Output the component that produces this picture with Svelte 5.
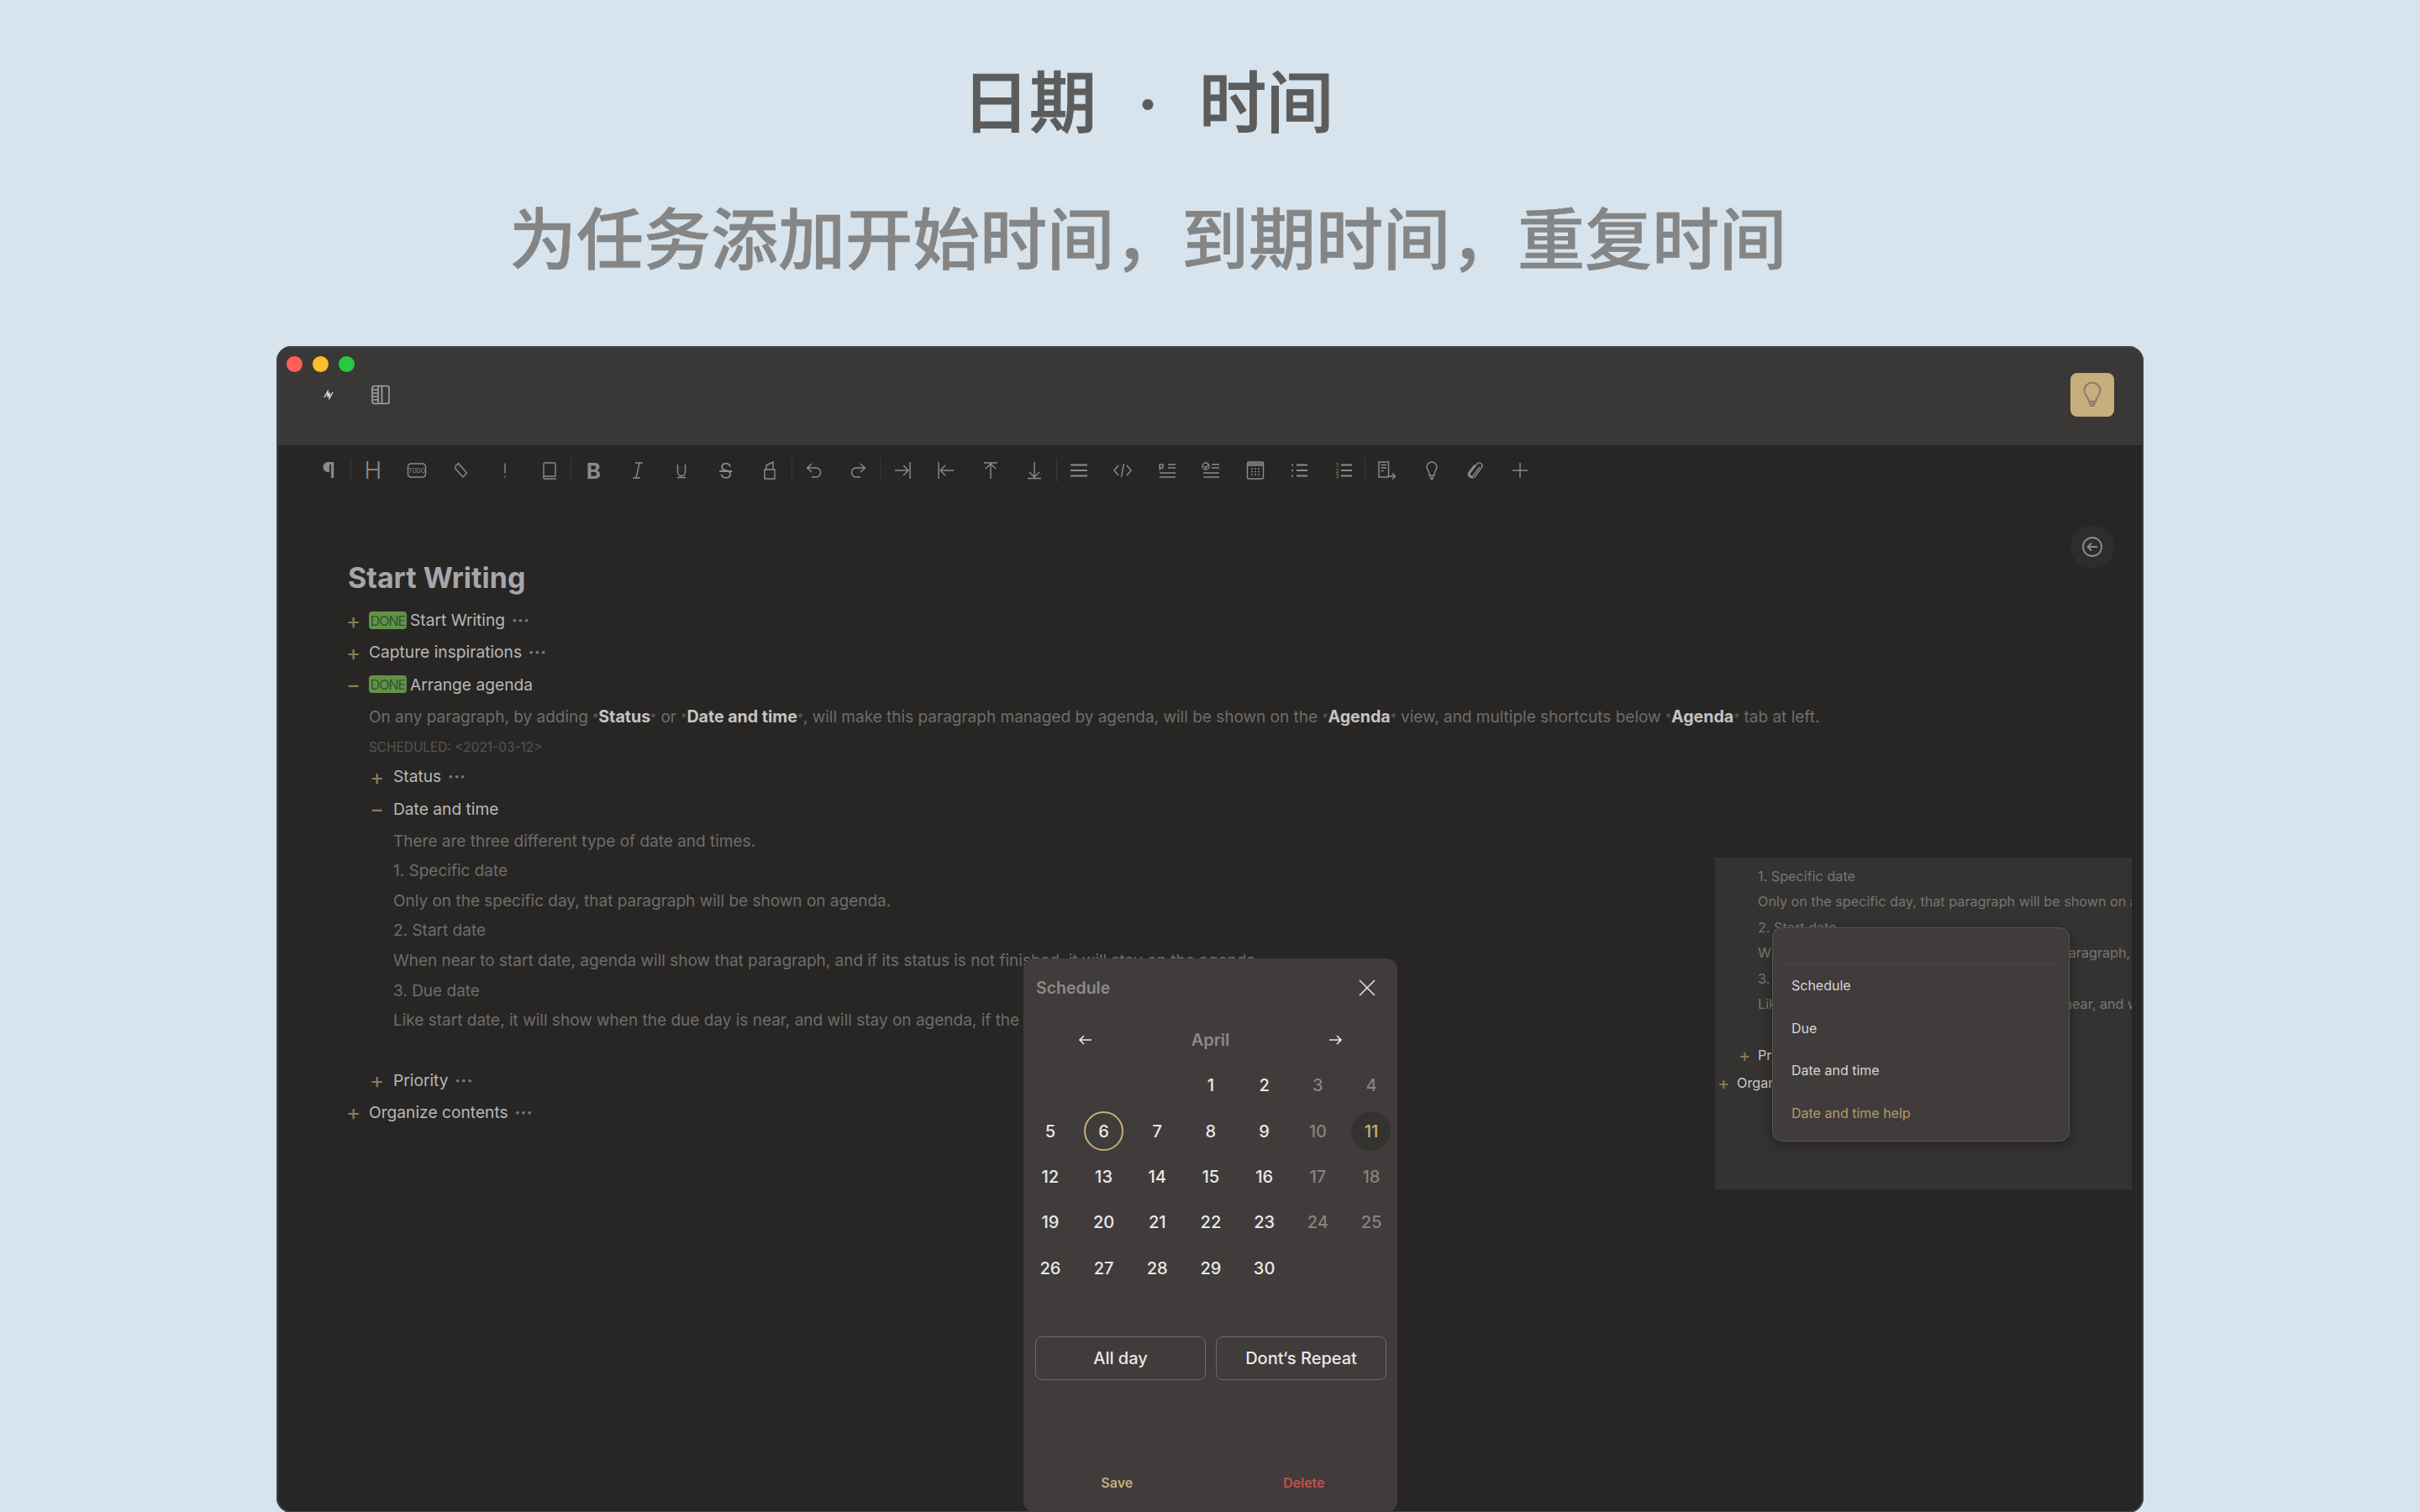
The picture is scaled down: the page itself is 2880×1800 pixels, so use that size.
<script>
	const tools = [
		{ label: '¶', cls: 'pilcrow', sep: true },
		{ label: 'H', cls: 'heading' },
		{ d: 'M7 6h14a3.500 3.500 0 0 1 3.500 3.500v9A3.500 3.500 0 0 1 21 22H7a3.500 3.500 0 0 1-3.500-3.500v-9A3.500 3.500 0 0 1 7 6z', todo: true },
		{ d: 'M7 9 10.500 5.500l10 11.500-4.500 5L7 12zM10.500 9.500h.6' },
		{ d: 'M14 5.500v12M14 21v1.600' },
		{ d: 'M7 24V6.500A1.500 1.500 0 0 1 8.500 5h11A1.500 1.500 0 0 1 21 6.500V21H8.500A1.500 1.500 0 0 0 7 22.500 1.500 1.500 0 0 0 8.500 24H22', sep: true },
		{ label: 'B', cls: 'bold' },
		{ d: 'M11 5h9M8 23h9M16 5l-4 18' },
		{ d: 'M9.500 7v9a4.500 4.500 0 0 0 9 0V7M9 22.500h10' },
		{ label: 'S', cls: 'strike' },
		{ d: 'M8 13h12v11H8zM10 13V8l8-4v9', sep: true },
		{ d: 'M11 6 5.500 11l5.500 5M6 11h10a5.500 5.500 0 0 1 0 11h-5' },
		{ d: 'M17 6l5.500 5L17 16M22 11H12a5.500 5.500 0 0 0 0 11h5', sep: true },
		{ d: 'M5 14h15M15 8l6 6-6 6M23 4v20' },
		{ d: 'M23 14H8M13 8l-6 6 6 6M5 4v20' },
		{ d: 'M6 5h16M14 24V6M8 12l6-6 6 6' },
		{ d: 'M6 23.500h16M14 4v19M8 16l6 6 6-6', sep: true },
		{ d: 'M4 7.500h20M4 14h20M4 20.500h20', thick: true },
		{ d: 'M9 8l-5 6 5 6M19 8l5 6-5 6M15.500 6l-3 16' },
		{ d: 'M5 7h4v4H5zM15 7h9M15 11h9M5 17h19M5 22h19M6 11l-1 3' },
		{ d: 'M15 7h9M15 11h9M5 17h19M5 22h19M6 9l2 2 3-4', ring: true },
		{ d: 'M6 4h16a1.500 1.500 0 0 1 1.500 1.500v17A1.500 1.500 0 0 1 22 24H6a1.500 1.500 0 0 1-1.500-1.500v-17A1.500 1.500 0 0 1 6 4zM5 8h18M5 6h18M9 12h2M13 12h2M17 12h2M9 15.500h2M13 15.500h2M17 15.500h2M9 19h2M13 19h2M17 19h2' },
		{ d: 'M5 7.500h2M11 7.500h13M5 14h2M11 14h13M5 20.500h2M11 20.500h13', thick: true },
		{ d: 'M11 7.500h13M11 14h13M11 20.500h13', nums: true, sep: true, thick: true },
		{ d: 'M4 4h11.500v18H4zM6.500 7.500h6.500M6.500 11h6.500M6.500 14.500h3M15 21h8M20 17.500l3.500 3.500-3.500 3.500' },
		{ d: 'M14 4a6 6 0 0 0-6 6c0 3 2.500 4.500 3 8v2h6v-2c.5-3.500 3-5 3-8a6 6 0 0 0-6-6zM11.500 22.500h5M12.500 24.500h3' },
		{ d: 'M19 10l-7.500 10a2.500 2.500 0 0 1-4-3L16 6a3.500 3.500 0 0 1 5.500 4.200L13 22a5 5 0 0 1-7.500-5L13 7.500' },
		{ d: 'M14 5v18M5 14h18' }
	];

	const blanks = [0, 1, 2];
	const days = Array.from({ length: 30 }, (_, i) => i + 1);
	const isDim = (d) => (d + 2) % 7 === 5 || (d + 2) % 7 === 6;
</script>

<div class="page">
	<header class="hero">
		<h1>日期 <span class="dot">·</span> 时间</h1>
		<h2>为任务添加开始时间，到期时间，重复时间</h2>
	</header>

	<section class="window">
		<div class="titlebar">
			<div class="lights">
				<i class="red"></i>
				<i class="yellow"></i>
				<i class="green"></i>
			</div>
			<div class="barrow">
				<svg class="logo" width="16" height="18" viewBox="0 0 16 18">
					<path d="M3 12 7 5v5l2-3M13 6l-4 7V8l-2 3" fill="none" stroke="#d8d8d8" stroke-width="1.500" />
				</svg>
				<svg class="side" width="24" height="24" viewBox="0 0 24 24" fill="none" stroke="#a5a5a5" stroke-width="1.600">
					<rect x="2" y="1.500" width="20" height="21" rx="2.500" />
					<path d="M9 2v20M13.500 2v20M3 6h5M3 10h5M3 14h5M3 18h5" />
				</svg>
			</div>
			<div class="bulb">
				<svg width="30" height="34" viewBox="0 0 30 34" fill="none" stroke="#857c69" stroke-width="2">
					<path d="M15 2.500a9.500 9.500 0 0 0-9.500 9.500c0 5 4.500 7 5.500 13h8c1-6 5.500-8 5.500-13A9.500 9.500 0 0 0 15 2.500zM11 27.500h8M12 30h6" />
				</svg>
			</div>
		</div>

		<div class="toolbar">
			{#each tools as t}
				<div class="tool" class:sep={t.sep}>
					{#if t.label}
						<span class={t.cls}>{t.label}</span>
					{:else}
						<svg width="28" height="28" viewBox="0 0 28 28" fill="none" stroke="#8b8b8b" stroke-width={t.thick ? 2 : 1.4}>
							<path d={t.d} />
							{#if t.todo}
								<text x="14" y="16.500" class="todo">TODO</text>
							{/if}
							{#if t.ring}
								<circle cx="8" cy="9" r="4" />
							{/if}
							{#if t.nums}
								<text x="6.500" y="10" class="num">1</text>
								<text x="6.500" y="16.500" class="num">2</text>
								<text x="6.500" y="23" class="num">3</text>
							{/if}
						</svg>
					{/if}
				</div>
			{/each}
		</div>

		<article class="doc">
			<h3>Start Writing</h3>
			<div class="row">
				<span class="tog">+</span><span class="done">DONE</span><span class="tight">Start Writing</span><span class="dots">•••</span>
			</div>
			<div class="row">
				<span class="tog">+</span><span>Capture inspirations</span><span class="dots">•••</span>
			</div>
			<div class="row">
				<span class="tog minus">−</span><span class="done">DONE</span><span class="tight">Arrange agenda</span>
			</div>
			<p class="para">
				On any paragraph, by adding <s>*</s><b>Status</b><s>*</s> or <s>*</s><b>Date and time</b><s>*</s>, will make this paragraph managed by agenda, will be shown on the <s>*</s><b>Agenda</b><s>*</s> view, and multiple shortcuts below <s>*</s><b>Agenda</b><s>*</s> tab at left.
			</p>
			<p class="para sched">SCHEDULED: &lt;2021-03-12&gt;</p>
			<div class="nested">
				<div class="row">
					<span class="tog">+</span><span>Status</span><span class="dots">•••</span>
				</div>
				<div class="row">
					<span class="tog minus">−</span><span>Date and time</span>
				</div>
				<p class="para">There are three different type of date and times.</p>
				<p class="para">1. Specific date</p>
				<p class="para">Only on the specific day, that paragraph will be shown on agenda.</p>
				<p class="para">2. Start date</p>
				<p class="para">When near to start date, agenda will show that paragraph, and if its status is not finished, it will stay on the agenda.</p>
				<p class="para">3. Due date</p>
				<p class="para">Like start date, it will show when the due day is near, and will stay on agenda, if the status is not finished.</p>
				<p class="para"></p>
				<div class="row">
					<span class="tog">+</span><span>Priority</span><span class="dots">•••</span>
				</div>
			</div>
			<div class="row">
				<span class="tog">+</span><span>Organize contents</span><span class="dots">•••</span>
			</div>
		</article>

		<div class="back">
			<svg width="26" height="26" viewBox="0 0 26 26" fill="none" stroke="#8e8e8e" stroke-width="1.800">
				<circle cx="13" cy="13" r="11" />
				<path d="M19 13H7.500M12 8.500 7.500 13l4.500 4.500" />
			</svg>
		</div>

		<div class="panel">
			<p>1. Specific date</p>
			<p>Only on the specific day, that paragraph will be shown on agenda.</p>
			<p>2. Start date</p>
			<p>When near to start date, agenda will show that paragraph, and if its status</p>
			<p>3. Due date</p>
			<p>Like start date, it will show when the due day is near, and will stay on agenda</p>
			<p></p>
			<div class="prow"><span class="ptog">+</span>Priority</div>
			<div class="prow org"><span class="ptog">+</span>Organize contents</div>

			<div class="menu">
				<div class="mhead"></div>
				<div class="mitem first">Schedule</div>
				<div class="mitem">Due</div>
				<div class="mitem">Date and time</div>
				<div class="mitem help">Date and time help</div>
			</div>
		</div>

		<div class="modal">
			<div class="mtitle">
				<span>Schedule</span>
				<svg width="22" height="22" viewBox="0 0 22 22" fill="none" stroke="#e8e8e8" stroke-width="1.500">
					<path d="M2 2l18 18M20 2 2 20" />
				</svg>
			</div>
			<div class="month">
				<svg width="22" height="16" viewBox="0 0 22 16" fill="none" stroke="#e8e8e8" stroke-width="1.600">
					<path d="M18 8H4M9 3 4 8l5 5" />
				</svg>
				<span>April</span>
				<svg width="22" height="16" viewBox="0 0 22 16" fill="none" stroke="#e8e8e8" stroke-width="1.600">
					<path d="M4 8h14M13 3l5 5-5 5" />
				</svg>
			</div>
			<div class="cal">
				{#each blanks as b}
					<span></span>
				{/each}
				{#each days as d}
					<div class="cell">
						<span class="day" class:dim={isDim(d)} class:today={d === 6} class:picked={d === 11}>{d}</span>
					</div>
				{/each}
			</div>
			<div class="btns">
				<div class="btn">All day</div>
				<div class="btn">Dont‘s Repeat</div>
			</div>
			<div class="foot">
				<span class="save">Save</span>
				<span class="del">Delete</span>
			</div>
		</div>
	</section>
</div>

<style>
	:global(body) {
		margin: 0;
		background: #d7e4ed;
	}
	.page {
		width: 2880px;
		height: 1800px;
		overflow: hidden;
		font-family: Inter, "Liberation Sans", sans-serif;
	}
	.hero {
		padding: 66px 148px 0 0;
		text-align: center;
		font-family: "Noto Sans CJK SC", sans-serif;
	}
	h1 {
		margin: 0;
		font-size: 80px;
		line-height: 100px;
		font-weight: 500;
		color: #5c5c5c;
		word-spacing: 15px;
		-webkit-text-stroke: 1px #5c5c5c;
	}
	.dot {
		font-size: 56px;
		line-height: 1;
		vertical-align: 5px;
		-webkit-text-stroke: 0;
	}
	h2 {
		margin: 63px 0 0;
		font-size: 80px;
		line-height: 100px;
		font-weight: 500;
		color: #858585;
		-webkit-text-stroke: 0.6px #858585;
	}
	.window {
		position: relative;
		margin: 83px 0 0 329px;
		width: 2222px;
		height: 1389px;
		overflow: hidden;
		border-radius: 18px;
		background: #272625;
	}
	.window::after {
		content: '';
		position: absolute;
		inset: 0;
		border-radius: 18px;
		box-shadow: inset 0 0 0 2px #424140, inset 0 1px 0 #6a6a69;
		pointer-events: none;
	}
	.titlebar {
		position: relative;
		height: 118px;
		background: #3a3836;
	}
	.lights {
		display: flex;
		gap: 12px;
		padding: 12px 0 0 12px;
	}
	.lights i {
		width: 19px;
		height: 19px;
		border-radius: 50%;
	}
	.red { background: #ff5f57; }
	.yellow { background: #febc2e; }
	.green { background: #28c840; }
	.barrow {
		display: flex;
		align-items: center;
		gap: 42px;
		padding: 15px 0 0 54px;
	}
	.bulb {
		position: absolute;
		top: 32px;
		right: 35px;
		width: 52px;
		height: 52px;
		border-radius: 8px;
		background: #c8ae7c;
		display: flex;
		align-items: center;
		justify-content: center;
	}
	.toolbar {
		display: flex;
		padding: 16px 0 0 36px;
	}
	.tool {
		position: relative;
		width: 52.500px;
		height: 28px;
		flex: none;
		display: flex;
		align-items: center;
		justify-content: center;
		color: #8b8b8b;
	}
	.tool.sep::after {
		content: '';
		position: absolute;
		right: 0;
		top: 0;
		height: 28px;
		width: 1px;
		background: #3a3938;
	}
	.pilcrow { font-size: 25px; font-weight: 700; }
	.heading { font-size: 28px; font-weight: 300; }
	.bold { font-size: 26px; font-weight: 700; }
	.strike {
		font-size: 24px;
		font-weight: 300;
		text-decoration: line-through;
	}
	.todo {
		font-size: 7px;
		text-anchor: middle;
		fill: #8b8b8b;
		stroke: none;
	}
	.num {
		font-size: 6.500px;
		text-anchor: middle;
		fill: #8b8b8b;
		stroke: none;
	}
	.doc {
		padding: 89px 0 0 85px;
		color: #b8b7b6;
		font-size: 19.200px;
	}
	h3 {
		margin: 0 0 6px;
		font-size: 34px;
		line-height: 50px;
		font-weight: 700;
		color: #a6a6aa;
	}
	.row {
		position: relative;
		height: 38.300px;
		display: flex;
		align-items: center;
		padding-left: 25px;
		white-space: nowrap;
	}
	.tog {
		position: absolute;
		left: -2px;
		width: 16px;
		text-align: center;
		color: #8f7c55;
		font-size: 26px;
	}
	.tight { margin-left: 4px; }
	.done {
		width: 45px;
		height: 21px;
		border-radius: 4px;
		background: #5f9448;
		color: #36522b;
		font-size: 16px;
		letter-spacing: -1px;
		line-height: 22px;
		text-align: center;
		overflow: hidden;
	}
	.dots {
		margin-left: 8px;
		font-size: 11px;
		letter-spacing: 1px;
		color: #7c7b7a;
	}
	.para {
		margin: 0 0 0 25px;
		height: 35.600px;
		line-height: 39.500px;
		font-size: 19px;
		color: #6e6d6b;
		white-space: nowrap;
	}
	.para b {
		font-size: 19.600px;
		color: #c4c3c2;
		font-weight: 700;
	}
	.para s {
		text-decoration: none;
		font-size: 14px;
		color: #5f5e5d;
	}
	.sched {
		font-size: 15.400px;
		line-height: 41px;
		color: #565554;
	}
	.nested {
		margin-left: 29px;
	}
	.nested .row {
		margin-left: -1px;
		padding-left: 26px;
	}
	.back {
		position: absolute;
		top: 213px;
		right: 35px;
		width: 52px;
		height: 52px;
		border-radius: 50%;
		background: #2e2d2c;
		display: flex;
		align-items: center;
		justify-content: center;
	}
	.panel {
		position: absolute;
		left: 1712px;
		top: 609px;
		width: 496px;
		height: 395px;
		box-sizing: border-box;
		padding: 7px 0 0 51px;
		overflow: hidden;
		background: #343331;
		font-size: 16.200px;
		color: #777674;
		white-space: nowrap;
	}
	.panel p {
		margin: 0;
		height: 30.400px;
		line-height: 30.400px;
	}
	.prow {
		position: relative;
		height: 30px;
		line-height: 30px;
		color: #c9c8c7;
	}
	.org {
		margin: 3px 0 0 -25px;
	}
	.ptog {
		position: absolute;
		left: -23px;
		width: 12px;
		text-align: center;
		color: #8f7c55;
		font-size: 22px;
	}
	.menu {
		position: absolute;
		left: 68px;
		top: 83px;
		width: 354px;
		height: 255px;
		box-sizing: border-box;
		border: 1px solid #575553;
		border-radius: 12px;
		background: #403c3b;
		box-shadow: 0 4px 14px rgba(0, 0, 0, 0.35);
		font-size: 16px;
	}
	.mhead {
		height: 42px;
		margin: 0 11px;
		border-bottom: 1px solid #4a4644;
	}
	.mitem {
		height: 50.500px;
		line-height: 50.500px;
		padding-left: 22px;
		color: #d6d5d4;
	}
	.help {
		color: #b19a6c;
	}
	.modal {
		position: absolute;
		z-index: 1;
		left: 889px;
		top: 729px;
		width: 445px;
		height: 660px;
		border-radius: 14px;
		background: #403c3b;
	}
	.mtitle {
		height: 70px;
		box-sizing: border-box;
		display: flex;
		align-items: center;
		justify-content: space-between;
		padding: 0 25px 0 15px;
		font-size: 19.500px;
		font-weight: 600;
		color: #8b8987;
	}
	.month {
		height: 54px;
		display: flex;
		align-items: center;
		justify-content: space-between;
		padding: 0 63px;
		font-size: 20px;
		font-weight: 600;
		color: #8b8987;
	}
	.cal {
		display: grid;
		grid-template-columns: repeat(7, 63.700px);
		grid-auto-rows: 54.400px;
	}
	.cell {
		display: flex;
		align-items: center;
		justify-content: center;
	}
	.day {
		width: 47px;
		height: 47px;
		box-sizing: border-box;
		border-radius: 50%;
		display: flex;
		align-items: center;
		justify-content: center;
		font-size: 20px;
		font-weight: 500;
		color: #e9e8e7;
	}
	.dim { color: #858381; }
	.today { border: 2px solid #c8ae7c; }
	.picked {
		background: #343230;
		color: #c8ae7c;
	}
	.btns {
		display: flex;
		gap: 12px;
		margin-top: 54.500px;
		padding: 0 13px 0 14px;
	}
	.btn {
		flex: 1;
		height: 52px;
		box-sizing: border-box;
		border: 1px solid #6d6a68;
		border-radius: 8px;
		line-height: 50px;
		text-align: center;
		font-size: 20px;
		font-weight: 500;
		color: #e9e8e7;
	}
	.foot {
		display: flex;
		margin-top: 100px;
		height: 44px;
		line-height: 44px;
		font-size: 16px;
		font-weight: 600;
	}
	.foot span {
		flex: 1;
		text-align: center;
	}
	.save { color: #c8ae7c; }
	.del { color: #c4504a; }
</style>
